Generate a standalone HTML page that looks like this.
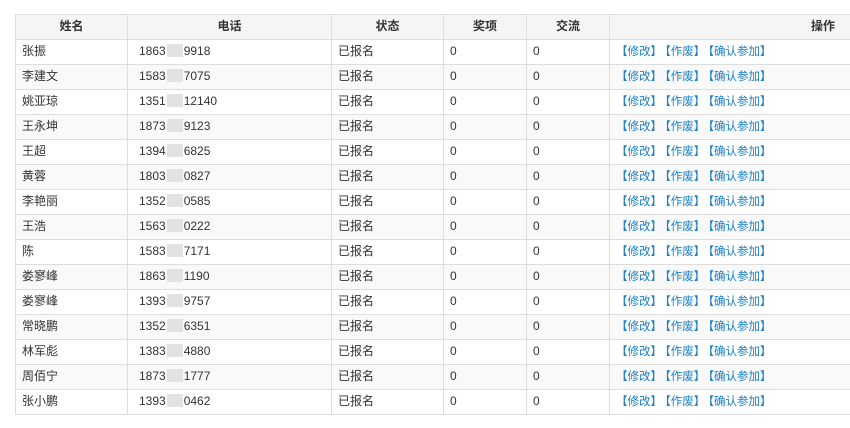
<!DOCTYPE html>
<html><head><meta charset="utf-8"><style>
body{margin:0;background:#fff;width:850px;height:428px;overflow:hidden;font-family:"Liberation Sans","Noto Sans CJK SC",sans-serif;font-size:12px;color:#333}
table{position:absolute;left:15px;top:14px;border-collapse:collapse;table-layout:fixed;width:850px}
td,th{border:1px solid #ddd;padding:0 0 0 6px;white-space:nowrap;line-height:23px}
tr{height:24.9px}
th{background:#f5f5f5;font-weight:bold;text-align:center;padding:0;line-height:23px}
#b tr:nth-child(even) td{background:#f9f9f9}
#b tr:nth-child(odd) td{background:#fff}
td:nth-child(2){padding-left:11px}
.b{display:inline-block;width:16px;height:13px;vertical-align:-2px;background:#e2e2e2;margin:0 1px}
a{color:#1a7fc8;text-decoration:none;margin-right:3px;font-size:11.5px}
td:last-child{padding-left:6px}
</style></head><body>
<table>
<colgroup><col style="width:112px"><col style="width:204px"><col style="width:112px"><col style="width:83px"><col style="width:83px"><col style="width:256px"></colgroup>
<thead><tr><th>姓名</th><th>电话</th><th>状态</th><th>奖项</th><th>交流</th><th style="text-align:right;padding-right:30px">操作</th></tr></thead>
<tbody id="b"></tbody>
</table>
<script>
var d=[["张振","1863","9918"],["李建文","1583","7075"],["姚亚琼","1351","12140"],["王永坤","1873","9123"],["王超","1394","6825"],["黄蓉","1803","0827"],["李艳丽","1352","0585"],["王浩","1563","0222"],["陈","1583","7171"],["娄寥峰","1863","1190"],["娄寥峰","1393","9757"],["常晓鹏","1352","6351"],["林军彪","1383","4880"],["周佰宁","1873","1777"],["张小鹏","1393","0462"]];
var h="";d.forEach(function(r){h+="<tr><td>"+r[0]+"</td><td>"+r[1]+"<span class=b></span>"+r[2]+"</td><td>已报名</td><td>0</td><td>0</td><td><a>【修改】</a><a>【作废】</a><a>【确认参加】</a></td></tr>";});
document.getElementById("b").innerHTML=h;
</script>
</body></html>
